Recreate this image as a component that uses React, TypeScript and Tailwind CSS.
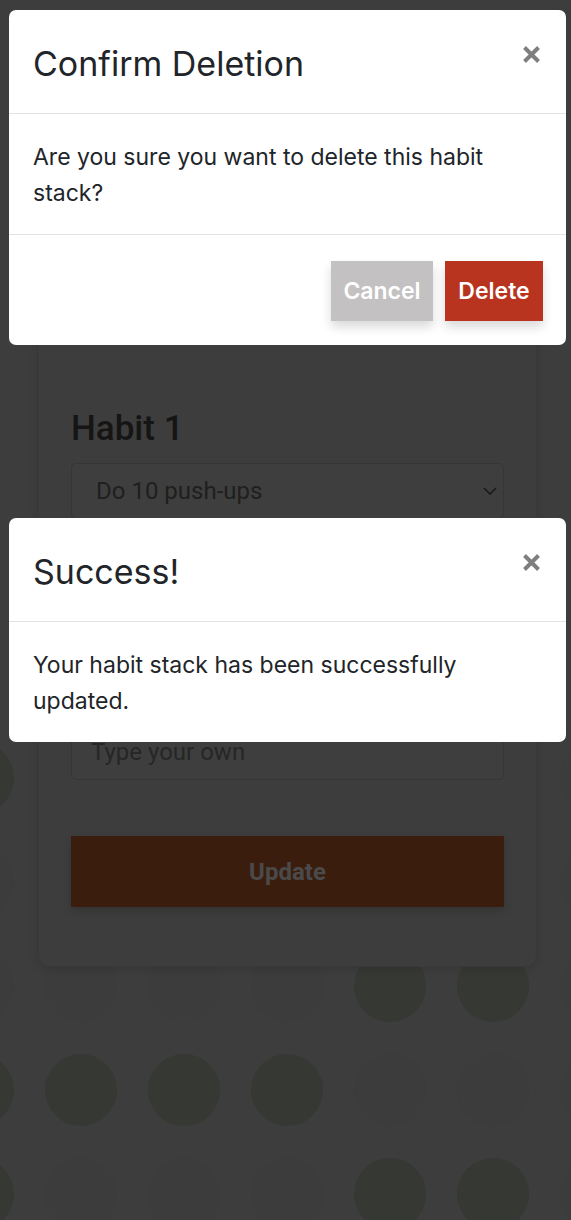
import React from "react";

const sans = "font-['Inter','Liberation_Sans',sans-serif]";
const roboto = "font-['Roboto','Liberation_Sans',sans-serif]";

// d = darker dot, l = lighter dot
const dotRows = [
  ["d", "l", "l", "l", "l", "l", "l"],
  ["l", "l", "l", "l", "l", "l", "l"],
  ["l", "l", "l", "l", "d", "d", "l"],
  ["d", "d", "d", "d", "l", "l", "l"],
  ["d", "l", "l", "l", "d", "d", "l"],
];

function CloseIcon() {
  return (
    <svg width="19" height="19" viewBox="0 0 19 19" className="text-[#7f7f7f]">
      <path d="M2.5 2.5 L16.5 16.5 M16.5 2.5 L2.5 16.5" stroke="currentColor" strokeWidth="4" strokeLinecap="butt" />
    </svg>
  );
}

function Modal({ title, children, footer }: { title: string; children: React.ReactNode; footer?: React.ReactNode }) {
  return (
    <div className={`w-[557px] bg-white rounded-[7px] ${sans} text-[#212529]`}>
      <div className="flex justify-between items-start pl-[24px] pr-[25px] pt-[28px] pb-[24px] border-b border-[#e2e3e8]">
        <h5 className="text-[34px] leading-[51px] font-normal">{title}</h5>
        <button className="mt-[7px]">
          <CloseIcon />
        </button>
      </div>
      <div className="px-[24px] pt-[25px] pb-[23px] text-[23px] leading-[36px]">{children}</div>
      {footer && (
        <div className="flex justify-end gap-[12px] pt-[26px] pb-[24px] pr-[23px] border-t border-[#e2e3e8]">{footer}</div>
      )}
    </div>
  );
}

export default function App() {
  return (
    <div className="relative min-h-[1220px] overflow-hidden bg-[#3d3d3d]">
      {/* dotted backdrop pattern */}
      <div className="absolute inset-0 overflow-hidden">
        <div className="grid grid-cols-[repeat(7,72px)] gap-x-[31px] gap-y-[32px] pt-[742px] ml-[-58px]">
          {dotRows.flat().map((c, i) => (
            <div
              key={i}
              className={`w-[72px] h-[72px] rounded-full ${c === "d" ? "bg-[#363834]" : "bg-[#3b3c3b]"}`}
            />
          ))}
        </div>
      </div>

      {/* page card */}
      <div className={`relative mx-[38px] mt-[40px] w-[499px] rounded-[12px] border border-[#393939] bg-[#3d3d3d] shadow-[0_2px_10px_rgba(0,0,0,0.12)] px-[32px] pt-[40px] pb-[59px] ${roboto}`}>
        <div className="h-[327px]" />
        <h3 className="text-[35px] leading-[42px] font-medium text-[#151515]">Habit 1</h3>
        <div className="mt-[13px] h-[56px] flex items-center justify-between rounded-[5px] border border-[#363636] bg-[#3e3e3e] pl-[24px] pr-[6px]">
          <span className="text-[24px] text-[#1f1f1f]">Do 10 push-ups</span>
          <svg width="14" height="8" viewBox="0 0 14 8">
            <path d="M1 1 L7 7 L13 1" fill="none" stroke="#1a1a1a" strokeWidth="1.6" />
          </svg>
        </div>
        <div className="h-[205px]" />
        <div className="h-[56px] flex items-center rounded-[5px] border border-[#363636] bg-[#3e3e3e] pl-[19px]">
          <span className="text-[24px] text-[#262626]">Type your own</span>
        </div>
        <button className="mt-[56px] w-full h-[71px] bg-[#3b1d0e] text-[24px] font-bold text-[#4a4a4a] shadow-[0_4px_8px_rgba(0,0,0,0.15)]">
          Update
        </button>
      </div>

      {/* open dialogs */}
      <div className="absolute left-[9px] top-[10px] flex flex-col gap-[173px]">
        <Modal
          title="Confirm Deletion"
          footer={
            <>
              <button className="w-[102px] h-[60px] bg-[#c3c1c2] text-white text-[23px] font-semibold shadow-[0_6px_10px_rgba(0,0,0,0.15)]">
                Cancel
              </button>
              <button className="w-[98px] h-[60px] bg-[#b8341e] text-white text-[23px] font-semibold shadow-[0_6px_10px_rgba(0,0,0,0.15)]">
                Delete
              </button>
            </>
          }
        >
          Are you sure you want to delete this habit stack?
        </Modal>
        <Modal title="Success!">Your habit stack has been successfully updated.</Modal>
      </div>
    </div>
  );
}
